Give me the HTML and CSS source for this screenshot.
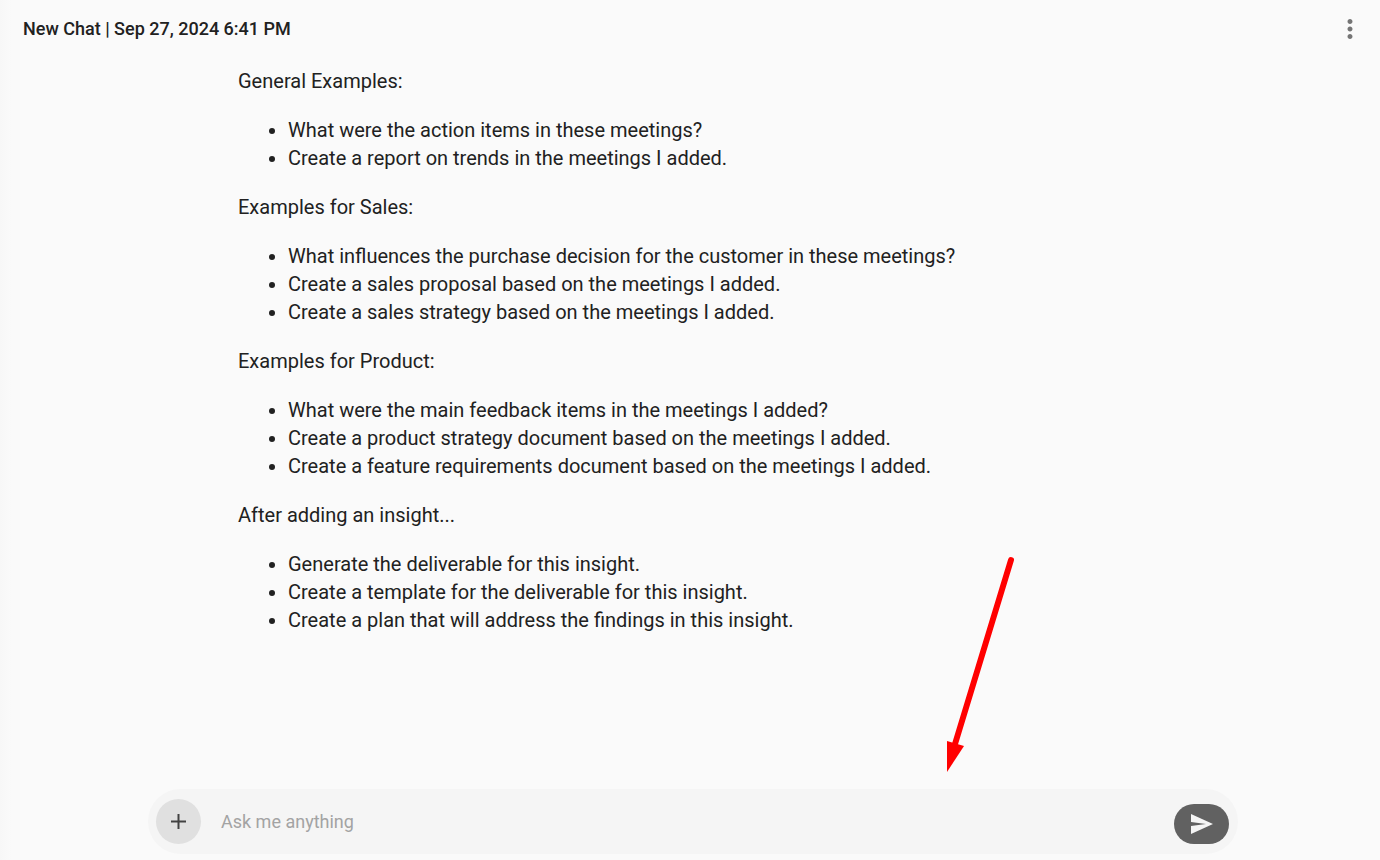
FILE: index.html
```html
<!DOCTYPE html>
<html lang="en">
<head>
<meta charset="utf-8">
<meta name="viewport" content="width=device-width, initial-scale=1">
<title>New Chat</title>
<link rel="stylesheet" href="styles.css">
</head>
<body>
<div class="chat">
  <header class="chat-header">
    <h1 class="chat-title">New Chat | Sep 27, 2024 6:41 PM</h1>
    <button class="menu-button" type="button" aria-label="More options">
      <svg width="10" height="30" viewBox="8 0 8 24" aria-hidden="true"><path fill="#757575" d="M12 8c1.100 0 2-.9 2-2s-.9-2-2-2-2 .9-2 2 .9 2 2 2zm0 2c-1.100 0-2 .9-2 2s.9 2 2 2 2-.9 2-2-.9-2-2-2zm0 6c-1.100 0-2 .9-2 2s.9 2 2 2 2-.9 2-2-.9-2-2-2z"/></svg>
    </button>
  </header>
  <main class="messages">
    <section class="message">
      <p>General Examples:</p>
      <ul>
        <li>What were the action items in these meetings?</li>
        <li>Create a report on trends in the meetings I added.</li>
      </ul>
      <p>Examples for Sales:</p>
      <ul>
        <li>What influences the purchase decision for the customer in these meetings?</li>
        <li>Create a sales proposal based on the meetings I added.</li>
        <li>Create a sales strategy based on the meetings I added.</li>
      </ul>
      <p>Examples for Product:</p>
      <ul>
        <li>What were the main feedback items in the meetings I added?</li>
        <li>Create a product strategy document based on the meetings I added.</li>
        <li>Create a feature requirements document based on the meetings I added.</li>
      </ul>
      <p>After adding an insight...</p>
      <ul>
        <li>Generate the deliverable for this insight.</li>
        <li>Create a template for the deliverable for this insight.</li>
        <li>Create a plan that will address the findings in this insight.</li>
      </ul>
    </section>
  </main>
  <form class="composer">
    <button class="add-button" type="button" aria-label="Add">
      <svg width="15" height="15" viewBox="0 0 15 15" aria-hidden="true"><path d="M7.500 0v15M0 7.500h15" fill="none" stroke="#424242" stroke-width="2"/></svg>
    </button>
    <input class="prompt" type="text" placeholder="Ask me anything" aria-label="Ask me anything">
    <button class="send-button" type="button" aria-label="Send">
      <svg width="22" height="20" viewBox="0 0 22 20" aria-hidden="true"><path fill="#f5f5f5" d="M0 0l22 10L0 20v-8l15-2L0 8z"/></svg>
    </button>
  </form>
  <svg class="arrow" width="72" height="220" viewBox="0 0 72 220" aria-hidden="true"><path d="M67 6L11 190" stroke="#f00" stroke-width="6" stroke-linecap="round"/><path d="M3 187l17 5L3 218z" fill="#f00"/></svg>
</div>
</body>
</html>
```
FILE: styles.css
```css
* {
  box-sizing: border-box;
}

body {
  margin: 0;
  background: #fafafa;
  color: #212121;
  font-family: Roboto, sans-serif;
}

button {
  display: flex;
  align-items: center;
  justify-content: center;
  flex: none;
  padding: 0;
  border: 0;
  cursor: pointer;
}

.chat {
  position: relative;
  display: flex;
  flex-direction: column;
  min-height: 100vh;
  padding: 0 17px 6px 23px;
  background: linear-gradient(to right, #f7f7f7, #fafafa 12px);
}

.chat-header {
  display: flex;
  align-items: center;
  justify-content: space-between;
  padding: 14px 0;
}

.chat-title {
  margin: 0;
  font-size: 18px;
  line-height: 28px;
  font-weight: 500;
}

.menu-button {
  width: 26px;
  height: 30px;
  background: none;
}

.messages {
  flex: 1;
  width: 100%;
  max-width: 1090px;
  margin: 0 auto;
  padding: 9px 90px 0;
}

.message {
  font-size: 20px;
  line-height: 28px;
}

.message p,
.message ul {
  margin: 0 0 21px;
}

.message ul {
  padding-left: 50px;
}

.composer {
  display: flex;
  align-items: center;
  gap: 20px;
  width: 100%;
  max-width: 1090px;
  height: 65px;
  margin: 0 auto;
  padding: 0 9px 0 8px;
  border-radius: 33px;
  background: #f5f5f5;
}

.add-button {
  width: 45px;
  height: 45px;
  border-radius: 50%;
  background: #e0e0e0;
}

.prompt {
  flex: 1;
  min-width: 0;
  padding: 0;
  border: 0;
  outline: 0;
  background: none;
  color: #212121;
  font: 18px/28px Roboto, sans-serif;
}

.prompt::placeholder {
  color: #a3a3a3;
}

.send-button {
  width: 55px;
  height: 40px;
  margin-top: 4px;
  border-radius: 20px;
  background: #616161;
}

.arrow {
  position: absolute;
  right: 364px;
  bottom: 86px;
  pointer-events: none;
}
```
